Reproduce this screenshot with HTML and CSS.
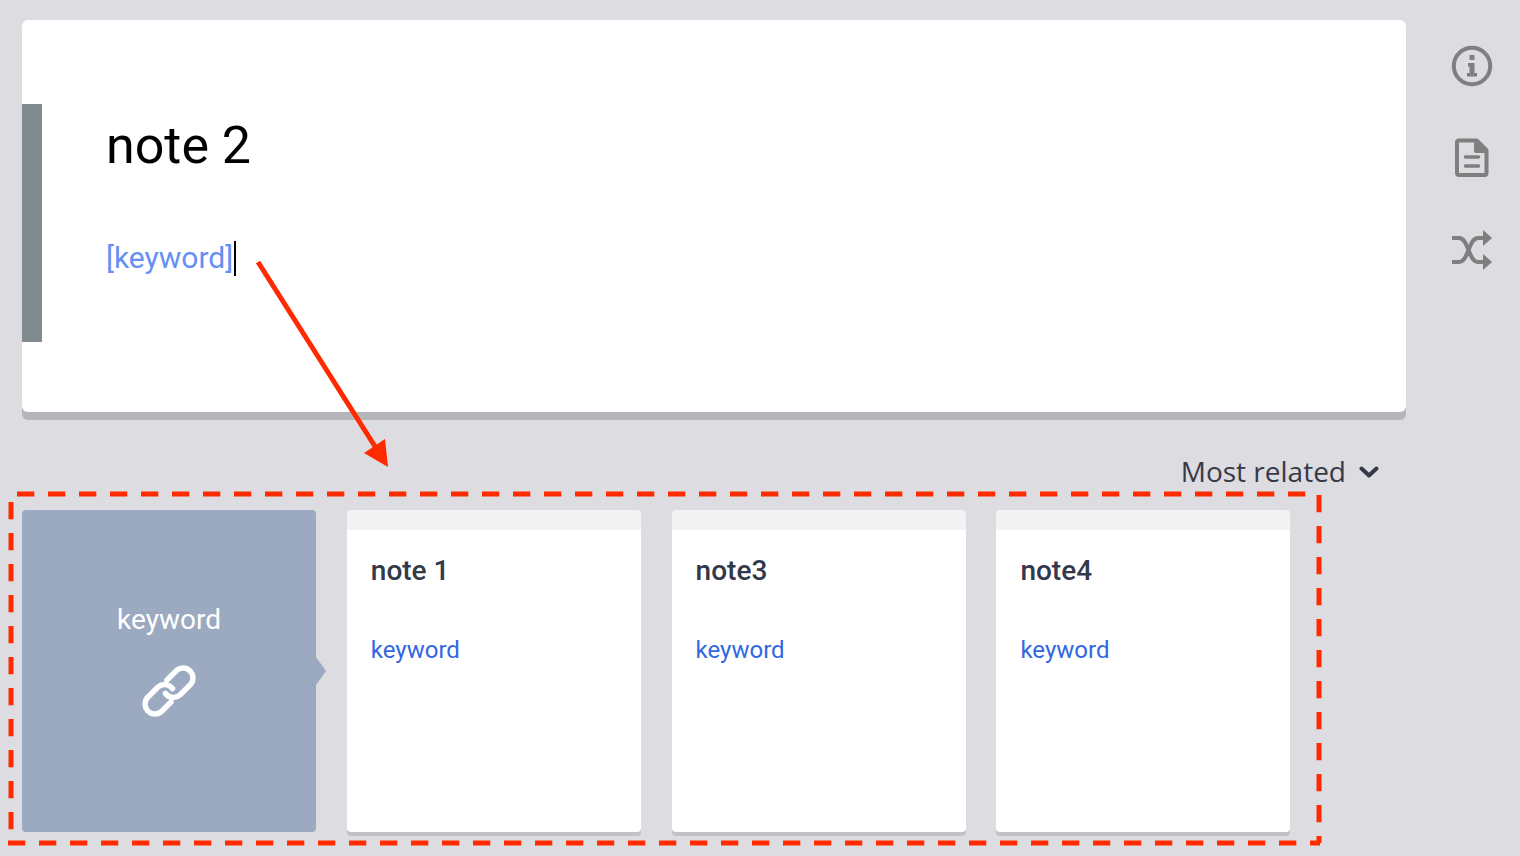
FILE: index.html
```html
<!DOCTYPE html>
<html lang="en">
<head>
<meta charset="utf-8">
<title>note 2</title>
<link rel="stylesheet" href="styles.css">
</head>
<body>
<div class="page">
  <main class="main">
    <section class="editor">
      <div class="editor-bar"></div>
      <div class="editor-body">
        <h1 class="editor-title">note 2</h1>
        <p class="editor-text"><span class="editor-link">[keyword]</span><span class="caret"></span></p>
      </div>
    </section>
    <div class="sort">
      <span class="sort-label">Most related</span>
      <svg class="sort-chevron" width="20" height="12" viewBox="0 0 20 12"><path d="M2.5 2.5 10 9.500l7.500-7"/></svg>
    </div>
    <section class="cards">
      <div class="keyword-card">
        <span class="keyword-name">keyword</span>
        <svg class="keyword-icon" width="60" height="60" viewBox="139 661 60 60">
          <path d="M167 680 177 670A10 10 0 0 1 191 684L180 695A10 10 0 0 1 165.500 693.500"/>
          <path d="M171 702 161 712A10 10 0 0 1 147 698L158 687A10 10 0 0 1 172.500 688.500"/>
        </svg>
      </div>
      <article class="note-card"><h2 class="note-title">note 1</h2><a class="note-link">keyword</a></article>
      <article class="note-card"><h2 class="note-title">note3</h2><a class="note-link">keyword</a></article>
      <article class="note-card"><h2 class="note-title">note4</h2><a class="note-link">keyword</a></article>
    </section>
  </main>
  <aside class="rail">
    <svg class="rail-icon" width="44" height="44" viewBox="0 0 44 44">
      <circle class="icon-line" cx="22" cy="22" r="18.2"/>
      <path class="icon-fill" d="M19.5 11h5v5h-5zM18 19h6.500v10H27v3.500H17V29h2.500v-6.500H18z"/>
    </svg>
    <svg class="rail-icon" width="44" height="44" viewBox="0 0 44 44">
      <path class="icon-line" d="M9 4.500h17.500L36.500 14.500V37a2 2 0 0 1-2 2H9a2 2 0 0 1-2-2V6.500a2 2 0 0 1 2-2z"/>
      <path class="icon-fill" d="M24 3h4l10 10v4H26a2 2 0 0 1-2-2z"/>
      <path class="icon-bar" d="M15.500 21h13M15.500 30h13"/>
    </svg>
    <svg class="rail-icon" width="44" height="44" viewBox="0 0 44 44">
      <path class="icon-line" d="M2 10h7c10 0 9 24 19 24h6M2 34h7c10 0 9-24 19-24h6"/>
      <path class="icon-fill" d="M33 2l9 8-9 8zM33 26l9 8-9 8z"/>
    </svg>
  </aside>
</div>
<svg class="annotation" width="1520" height="856" viewBox="0 0 1520 856">
  <path class="anno-dash" d="M17 494H1319"/>
  <path class="anno-dash" d="M1319 495V843"/>
  <path class="anno-dash" d="M8 843H1320"/>
  <path class="anno-dash" d="M11 502V832"/>
  <path class="anno-line" d="M258 262 376 448"/>
  <path class="anno-head" d="M388 467 364 453 385 439z"/>
</svg>
</body>
</html>
```

FILE: styles.css
```css
* { box-sizing: border-box; }

html, body {
  margin: 0;
  height: 856px;
  overflow: hidden;
  background: #dcdce1;
  font-family: Roboto, "Liberation Sans", sans-serif;
}

.page {
  display: flex;
  height: 856px;
  padding: 20px 0 0 22px;
}

.main {
  width: 1384px;
  flex: none;
}

.editor {
  display: flex;
  height: 392px;
  background: #fff;
  box-shadow: 0 8px 0 #b5b6b9;
  border-radius: 6px;
}

.editor-bar {
  width: 20px;
  height: 238px;
  margin-top: 84px;
  background: #7f8b8e;
}

.editor-body {
  padding: 95px 0 0 64px;
}

.editor-title {
  margin: 0;
  font-size: 52px;
  line-height: 62px;
  font-weight: 400;
  color: #000;
}

.editor-text {
  display: flex;
  align-items: center;
  margin: 63px 0 0;
  font-size: 30px;
  line-height: 36px;
}

.editor-link { color: #6490f4; }

.caret {
  width: 2px;
  height: 35px;
  margin-left: 1px;
  background: #000;
}

.sort {
  display: flex;
  justify-content: flex-end;
  align-items: center;
  gap: 13px;
  height: 32px;
  margin-top: 44px;
  padding-right: 27px;
  color: #363a47;
}

.sort-label {
  position: relative;
  top: -1px;
  font-family: "Open Sans", sans-serif;
  font-size: 28px;
  line-height: 32px;
}

.sort-chevron path {
  fill: none;
  stroke: #363a47;
  stroke-width: 4;
  stroke-linecap: round;
  stroke-linejoin: round;
}

.cards {
  display: grid;
  grid-template-columns: repeat(4, 294px);
  column-gap: 30.8px;
  height: 322px;
  margin-top: 22px;
}

.keyword-card {
  position: relative;
  display: flex;
  flex-direction: column;
  align-items: center;
  height: 322px;
  padding-top: 92px;
  background: #9baac0;
  border-radius: 4px;
}

.keyword-card::after {
  content: "";
  position: absolute;
  left: 100%;
  top: 147px;
  width: 10px;
  height: 28px;
  background: #9baac0;
  clip-path: polygon(0 0, 100% 50%, 0 100%);
}

.keyword-name {
  font-size: 28px;
  line-height: 36px;
  color: #fff;
}

.keyword-icon {
  margin-top: 23px;
}

.keyword-icon path {
  fill: none;
  stroke: #fff;
  stroke-width: 5.500;
  stroke-linecap: round;
}

.note-card {
  height: 322px;
  padding: 20px 24px 0;
  background: #fff;
  box-shadow: 0 4px 0 #c1c2c5;
  border-radius: 4px;
  background-image: linear-gradient(#f3f3f4, #f3f3f4);
  background-repeat: no-repeat;
  background-size: 100% 20px;
}

.note-title {
  margin: 24px 0 0;
  font-size: 28px;
  line-height: 34px;
  font-weight: 500;
  color: #33384a;
}

.note-link {
  display: block;
  margin-top: 47px;
  font-size: 24px;
  line-height: 30px;
  color: #3167e0;
}

.rail {
  display: flex;
  flex-direction: column;
  align-items: center;
  gap: 48px;
  width: 44px;
  margin-left: 44px;
  padding-top: 24px;
}

.rail-icon { flex: none; display: block; }

.icon-line {
  fill: none;
  stroke: #7f7f7f;
  stroke-width: 4;
}

.icon-fill { fill: #7f7f7f; }

.icon-bar {
  fill: none;
  stroke: #7f7f7f;
  stroke-width: 3.500;
  stroke-linecap: round;
}

.annotation {
  position: absolute;
  left: 0;
  top: 0;
  pointer-events: none;
}

.anno-dash {
  fill: none;
  stroke: #ff2a00;
  stroke-width: 5;
  stroke-dasharray: 17.300 13.700;
}

.anno-line {
  fill: none;
  stroke: #ff2a00;
  stroke-width: 5;
}

.anno-head { fill: #ff2a00; }
```
